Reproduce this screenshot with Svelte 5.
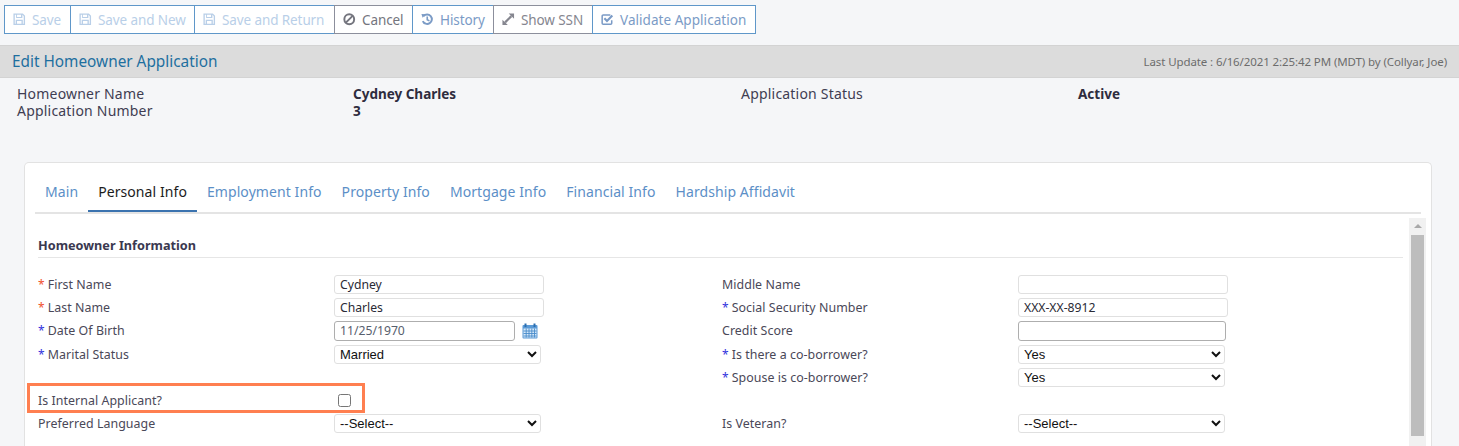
<script>
  const left = [
    { label: 'First Name', req: 'red', type: 'text', value: 'Cydney' },
    { label: 'Last Name', req: 'red', type: 'text', value: 'Charles' },
    { label: 'Date Of Birth', req: 'blue', type: 'date', value: '11/25/1970' },
    { label: 'Marital Status', req: 'blue', type: 'select', value: 'Married' },
    { type: 'blank' },
    { label: 'Is Internal Applicant?', type: 'check' },
    { label: 'Preferred Language', type: 'select', value: '--Select--' }
  ];
  const right = [
    { label: 'Middle Name', type: 'text', value: '' },
    { label: 'Social Security Number', req: 'blue', type: 'text', value: 'XXX-XX-8912' },
    { label: 'Credit Score', type: 'dark', value: '' },
    { label: 'Is there a co-borrower?', req: 'blue', type: 'select', value: 'Yes' },
    { label: 'Spouse is co-borrower?', req: 'blue', type: 'select', value: 'Yes' },
    { type: 'blank' },
    { label: 'Is Veteran?', type: 'select', value: '--Select--' }
  ];
  const rows = left.map((l, i) => [l, right[i]]);
  const tabs = ['Main', 'Personal Info', 'Employment Info', 'Property Info', 'Mortgage Info', 'Financial Info', 'Hardship Affidavit'];
  const saves = ['Save', 'Save and New', 'Save and Return'];
</script>

{#snippet field(f)}
  {#if f.type === 'blank'}
    <div></div><div></div>
  {:else}
    <div class="label">{#if f.req}<span class="req {f.req}">*</span>{/if}{f.label}</div>
    <div class="control">
      {#if f.type === 'text'}
        <input class="txt" value={f.value} readonly />
      {:else if f.type === 'dark'}
        <input class="txt dark" value={f.value} readonly />
      {:else if f.type === 'date'}
        <input class="txt date" value={f.value} readonly />
        <svg class="cal" viewBox="0 0 16 16" width="16" height="16" aria-hidden="true">
          <rect x="0.5" y="2" width="15" height="13.5" rx="1" fill="#5b9ad6" />
          <rect x="1.5" y="5.5" width="13" height="9" fill="#d6e8f8" />
          <path d="M1.5 8h13M1.5 10.5h13M1.5 13h13M4.2 5.5v9M7 5.5v9M9.8 5.5v9M12.5 5.5v9" stroke="#4a8ccb" stroke-width="0.9" />
          <rect x="2.5" y="0.5" width="2" height="3.5" fill="#2c6fb0" />
          <rect x="11.5" y="0.5" width="2" height="3.5" fill="#2c6fb0" />
        </svg>
      {:else if f.type === 'select'}
        <select class="sel"><option>{f.value}</option></select>
      {:else if f.type === 'check'}
        <input class="chk" type="checkbox" />
      {/if}
    </div>
  {/if}
{/snippet}

<div class="toolbar">
  {#each saves as s}
    <button class="tb off">
      <svg class="ic" viewBox="0 0 14 14" aria-hidden="true"><path fill-rule="evenodd" d="M0.5 0.5h10.500l2.500 2.500v10.500h-13zM2 2v10h1v-4.500h8v4.500h1v-8.300l-1.500-1.700v3.500h-7v-3.500zM4.500 2v2.500h4.500v-2.500zM4.500 9v3h5v-3z" fill="currentColor" /></svg>
      {s}
    </button>
  {/each}
  <button class="tb grey dark-text">
    <svg class="ic" viewBox="0 0 14 14" aria-hidden="true"><circle cx="7" cy="7" r="5.500" fill="none" stroke="currentColor" stroke-width="2.200" /><path d="M3.200 10.800l7.600-7.600" stroke="currentColor" stroke-width="2.200" /></svg>
    Cancel
  </button>
  <button class="tb hist">
    <svg class="ic" viewBox="0 0 14 14" aria-hidden="true"><path d="M2.800 3.500a5.300 5.300 0 1 1-0.800 5.500" fill="none" stroke="currentColor" stroke-width="2.200" /><path d="M0.500 1l5 0.300-3.700 4z" fill="currentColor" /><path d="M7 4v3.500l2.400 1.300" fill="none" stroke="currentColor" stroke-width="1.800" /></svg>
    History
  </button>
  <button class="tb grey ssn">
    <svg class="ic" viewBox="0 0 14 14" aria-hidden="true"><path d="M7.500 0.500h6v6zM6.500 13.500h-6v-6z" fill="currentColor" /><path d="M3.500 10.500l7-7" stroke="currentColor" stroke-width="2.400" /></svg>
    Show SSN
  </button>
  <button class="tb val">
    <svg class="ic" viewBox="0 0 14 14" aria-hidden="true"><path d="M12 8v3.500a1.200 1.200 0 0 1-1.200 1.200h-8.300a1.200 1.200 0 0 1-1.200-1.200v-8a1.200 1.200 0 0 1 1.200-1.200h8" fill="none" stroke="currentColor" stroke-width="1.700" /><path d="M3.800 6l2.900 2.900 6-6" fill="none" stroke="currentColor" stroke-width="2.400" /></svg>
    Validate Application
  </button>
</div>

<header class="band">
  <h1>Edit Homeowner Application</h1>
  <span class="updated">Last Update : 6/16/2021 2:25:42 PM (MDT) by (Collyar, Joe)</span>
</header>

<section class="summary">
  <span>Homeowner Name</span><b>Cydney Charles</b><span>Application Status</span><b>Active</b>
  <span>Application Number</span><b>3</b>
</section>

<main class="card">
  <nav class="tabs">
    {#each tabs as t, i}
      <span class="tab" class:active={i === 1}>{t}</span>
    {/each}
  </nav>
  <div class="scrollwrap">
    <div class="content">
      <h2>Homeowner Information</h2>
      <div class="form">
        {#each rows as [l, r]}
          <div class="row" class:flagged={l.type === 'check'}>
            {@render field(l)}
            {@render field(r)}
          </div>
        {/each}
      </div>
    </div>
    <div class="scrollbar">
      <span class="arrow"></span>
      <span class="thumb"></span>
    </div>
  </div>
</main>

<style>
  :global(html), :global(body) { margin: 0; height: 100%; overflow: hidden; }
  :global(body) {
    background: #f5f6f8;
    font-family: "Noto Sans", "Open Sans", sans-serif;
    font-size: 14px;
    color: #3f3d52;
  }
  .toolbar { display: flex; height: 29px; margin: 5px 0 0 4px; }
  .tb {
    display: flex; align-items: center; gap: 6.5px;
    height: 29px; padding: 0 8px;
    margin-left: -1px;
    background: #fff;
    border: 1px solid #5f97c9;
    font: inherit; font-size: 13.5px;
    letter-spacing: -0.1px;
    white-space: nowrap;
  }
  .tb:first-child { margin-left: 0; }
  .off { color: #b9cfe8; }
  .off:nth-child(1) { width: 67px; }
  .off:nth-child(2) { width: 125px; }
  .off:nth-child(3) { width: 141px; }
  .grey { border-color: #8c8f9c; color: #85868f; }
  .dark-text { color: #74757e; width: 79px; }
  .ssn { width: 100px; }
  .hist { color: #7b9bc6; width: 82px; border-left-color: #5f97c9; }
  .val { color: #7b9bc6; width: 164px; letter-spacing: 0.05px; }
  .ic { width: 12.500px; height: 12.500px; flex: none; }

  .band {
    display: flex; justify-content: space-between; align-items: center;
    height: 31px; margin-top: 11px; padding: 0 12px;
    background: #dcdcdc;
    border-top: 1px solid #d3d3d3;
    border-bottom: 1px solid #d3d3d3;
  }
  h1 { margin: 0 0 2px; font-size: 15.350px; font-weight: 400; color: #1e6f9f; }
  .updated { font-size: 11.500px; color: #6c6c6c; letter-spacing: -0.1px; }

  .summary {
    display: grid;
    grid-template-columns: 336px 388px 337px 1fr;
    grid-auto-rows: 17px;
    padding: 8px 0 0 17px;
    line-height: 17px;
  }
  .summary span { color: #3f3d52; letter-spacing: 0.2px; line-height: 15px; }
  .summary b { font-weight: 700; color: #2e2c3e; font-size: 13.500px; }

  .card {
    box-sizing: border-box;
    margin: 42px 27px 0 24px;
    height: 284px;
    background: #fff;
    border: 1px solid #e2e2e2;
    border-bottom: none;
    border-radius: 5px 5px 0 0;
    padding: 0 10px;
  }
  .tabs {
    display: flex;
    height: 49px;
    border-bottom: 2px solid #e4e4e4;
  }
  .tab {
    display: flex; align-items: center;
    box-sizing: border-box;
    height: 49px;
    padding: 9px 10px 0;
    border-bottom: 2px solid transparent;
    color: #5c8fc7;
    letter-spacing: 0.08px;
    white-space: nowrap;
  }
  .tab.active { color: #1c1c1c; border-bottom-color: #3b73af; }
  .scrollwrap { display: flex; margin-top: 4px; }
  .content { flex: none; width: 1365px; margin-left: 3px; }
  h2 {
    margin: 0; padding: 19px 0 3px;
    height: 17px;
    line-height: 17px;
    font-size: 12.700px; font-weight: 700; color: #3a3850;
    border-bottom: 1px solid #e6e6e6;
  }
  .form { margin-top: 15px; }
  .row {
    position: relative;
    display: grid;
    grid-template-columns: 296px 388px 296px 1fr;
    height: 23.2px;
    align-items: center;
    font-size: 13px;
  }
  .flagged::before {
    content: "";
    position: absolute;
    z-index: 1;
    left: -11px; top: -6px;
    width: 332px; height: 24px;
    border: 3px solid #ff7f50;
    pointer-events: none;
  }
  .label { white-space: nowrap; color: #4a4858; font-size: 12.400px; letter-spacing: 0.05px; }
  .req { margin-right: 3px; font-size: 12px; }
  .req.red { color: #f0502d; }
  .req.blue { color: #3333dd; }
  .control { display: flex; align-items: center; gap: 7px; }
  input.txt {
    box-sizing: border-box;
    width: 210px; height: 19px;
    padding: 0 5px;
    border: 1px solid #e0e0e0;
    border-radius: 3px;
    background: #fff;
    font: inherit; font-size: 12.200px;
    color: #2a2a35;
    outline: none;
  }
  input.txt.dark { width: 208px; height: 20px; border-color: #aeaeae; }
  input.txt.date { width: 181px; height: 20px; border-color: #aeaeae; color: #57606e; }
  .cal { flex: none; }
  .sel {
    box-sizing: border-box;
    width: 207px; height: 19px;
    padding: 0 0 0 1px;
    border: 1px solid #e0e0e0;
    border-radius: 3px;
    background: #fff;
    font-family: "Liberation Sans", sans-serif;
    font-size: 13px;
    color: #111;
  }
  .chk {
    width: 13px; height: 13px; margin: 0 0 0 4px;
    appearance: auto;
  }
  .scrollbar {
    display: flex; flex-direction: column; align-items: center;
    flex: none;
    width: 17px; height: 228px;
    margin-left: 6px;
    background: #f1f1f1;
  }
  .arrow {
    flex: none;
    width: 0; height: 0; margin: 6px 0 7px;
    border-left: 4px solid transparent;
    border-right: 4px solid transparent;
    border-bottom: 4px solid #a9a9a9;
  }
  .thumb { width: 13px; height: 201px; flex: none; background: #bdbdbd; }
</style>
